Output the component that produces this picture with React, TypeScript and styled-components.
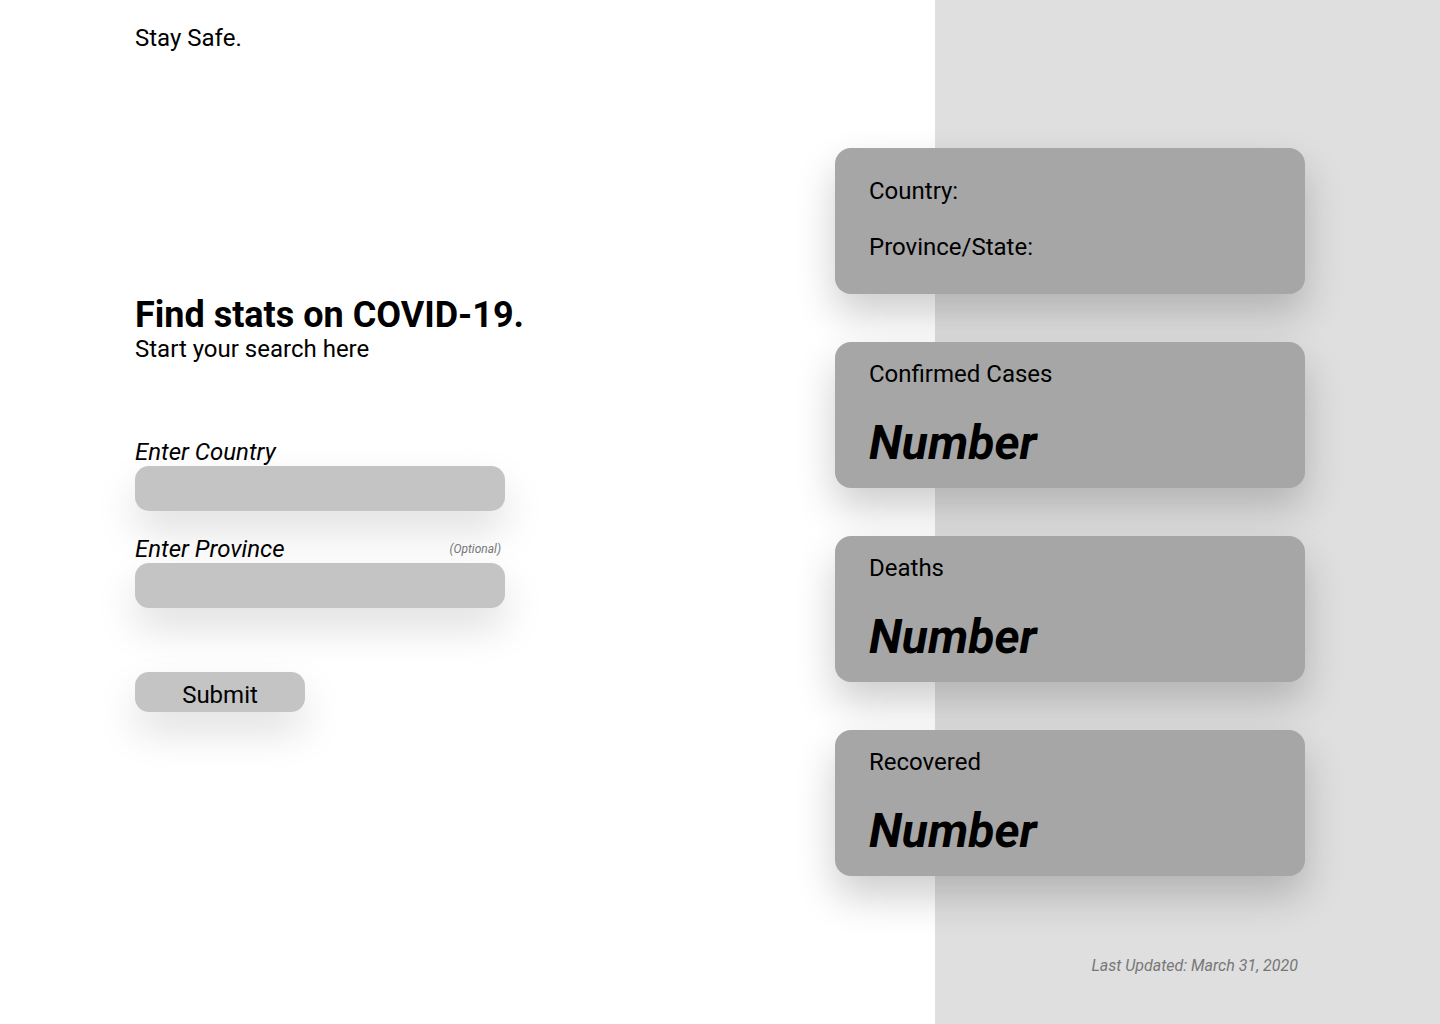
import styled, { createGlobalStyle } from "styled-components";

const GlobalStyle = createGlobalStyle`
  html, body {
    margin: 0;
    padding: 0;
  }
  body {
    font-family: Roboto, "Liberation Sans", sans-serif;
    color: #000;
    background: #fff;
  }
`;

const stats = [
  { id: "confirmed", label: "Confirmed Cases", value: "Number" },
  { id: "deaths", label: "Deaths", value: "Number" },
  { id: "recovered", label: "Recovered", value: "Number" },
];

const App = () => {
  return (
    <>
      <GlobalStyle />
      <Page>
        <LeftColumn>
          <Brand>Stay Safe.</Brand>
          <Heading>Find stats on COVID-19.</Heading>
          <SubHeading>Start your search here</SubHeading>

          <Form onSubmit={(e) => e.preventDefault()}>
            <Field>
              <LabelRow>
                <Label htmlFor="country">Enter Country</Label>
              </LabelRow>
              <Input id="country" type="text" />
            </Field>
            <Field>
              <LabelRow>
                <Label htmlFor="province">Enter Province</Label>
                <Optional>(Optional)</Optional>
              </LabelRow>
              <Input id="province" type="text" />
            </Field>
            <SubmitButton type="submit">Submit</SubmitButton>
          </Form>
        </LeftColumn>

        <RightColumn>
          <CardList>
            <Card $padTop={29}>
              <LocationLine>Country:</LocationLine>
              <LocationLine>Province/State:</LocationLine>
            </Card>
            {stats.map((stat) => (
              <Card key={stat.id} $padTop={18}>
                <StatLabel>{stat.label}</StatLabel>
                <StatValue>{stat.value}</StatValue>
              </Card>
            ))}
          </CardList>
          <Updated>Last Updated: March 31, 2020</Updated>
        </RightColumn>
      </Page>
    </>
  );
};

export default App;

const Page = styled.div`
  display: flex;
  width: 1440px;
  height: 1024px;
  overflow: hidden;
  background: linear-gradient(to right, #ffffff 935px, #dfdfdf 935px);
`;

const LeftColumn = styled.div`
  display: flex;
  flex-direction: column;
  width: 700px;
  padding-left: 135px;
`;

const Brand = styled.div`
  margin-top: 24px;
  font-size: 24px;
  line-height: 28px;
`;

const Heading = styled.h1`
  margin: 243px 0 0;
  font-size: 36px;
  line-height: 40px;
  font-weight: 700;
`;

const SubHeading = styled.p`
  margin: 0;
  font-size: 24px;
  line-height: 29px;
`;

const Form = styled.form`
  display: flex;
  flex-direction: column;
  margin-top: 74px;
  width: 370px;
`;

const Field = styled.div`
  display: flex;
  flex-direction: column;
  margin-bottom: 24px;
`;

const LabelRow = styled.div`
  display: flex;
  justify-content: space-between;
  align-items: center;
  padding-right: 4px;
`;

const Label = styled.label`
  font-size: 24px;
  line-height: 28px;
  font-style: italic;
`;

const Optional = styled.span`
  font-size: 12px;
  line-height: 14px;
  font-style: italic;
  color: #777;
`;

const Input = styled.input`
  box-sizing: border-box;
  width: 370px;
  height: 45px;
  border: none;
  border-radius: 14px;
  background: #c4c4c4;
  box-shadow: 0 20px 40px rgba(0, 0, 0, 0.13);
  outline: none;
  padding: 0 16px;
  font: inherit;
`;

const SubmitButton = styled.button`
  margin-top: 40px;
  width: 170px;
  height: 40px;
  padding: 6px 0 0;
  border: none;
  border-radius: 14px;
  background: #c4c4c4;
  box-shadow: 0 20px 40px rgba(0, 0, 0, 0.13);
  font-family: Roboto, "Liberation Sans", sans-serif;
  font-size: 24px;
  line-height: 28px;
  color: #000;
  cursor: pointer;
`;

const RightColumn = styled.div`
  display: flex;
  flex-direction: column;
  width: 470px;
`;

const CardList = styled.div`
  display: flex;
  flex-direction: column;
  gap: 48px;
  margin-top: 148px;
`;

const Card = styled.div<{ $padTop: number }>`
  box-sizing: border-box;
  height: 146px;
  padding: ${(p) => p.$padTop}px 34px 0;
  border-radius: 16px;
  background: #a6a6a6;
  box-shadow: 0 20px 40px rgba(0, 0, 0, 0.2);
`;

const LocationLine = styled.div`
  font-size: 24px;
  line-height: 28px;
  margin-bottom: 28px;
`;

const StatLabel = styled.div`
  font-size: 24px;
  line-height: 28px;
`;

const StatValue = styled.div`
  margin-top: 27px;
  font-size: 48px;
  line-height: 56px;
  font-weight: 700;
  font-style: italic;
`;

const Updated = styled.div`
  margin-top: 80px;
  padding-right: 7px;
  text-align: right;
  font-size: 16px;
  font-style: italic;
  color: #777;
`;
